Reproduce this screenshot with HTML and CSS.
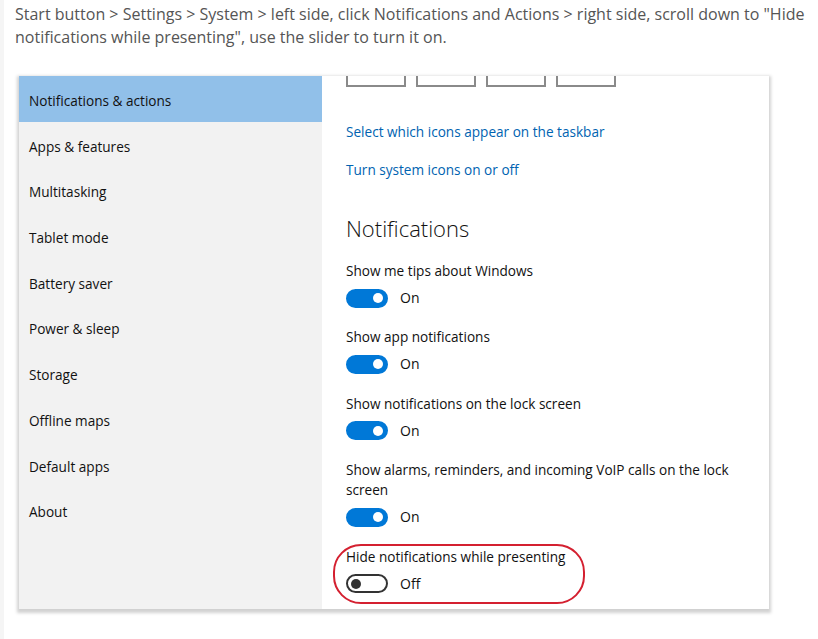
FILE: index.html
```html
<!DOCTYPE html>
<html lang="en">
<head>
    <meta charset="UTF-8">
    <meta name="viewport" content="width=device-width, initial-scale=1.0">
    <title>Hide notifications while presenting</title>
    <link rel="stylesheet" href="styles.css">
</head>
<body>
    <div class="page">
        <p class="intro">Start button &gt; Settings &gt; System &gt; left side, click Notifications and Actions &gt; right side, scroll down to "Hide notifications while presenting", use the slider to turn it on.</p>
        <div class="shot">
            <ul class="side-menu">
                <li class="active">Notifications &amp; actions</li>
                <li>Apps &amp; features</li>
                <li>Multitasking</li>
                <li>Tablet mode</li>
                <li>Battery saver</li>
                <li>Power &amp; sleep</li>
                <li>Storage</li>
                <li>Offline maps</li>
                <li>Default apps</li>
                <li>About</li>
            </ul>
            <div class="settings">
                <div class="quick-boxes">
                    <span></span><span></span><span></span><span></span>
                </div>
                <a class="link" href="#">Select which icons appear on the taskbar</a>
                <a class="link" href="#">Turn system icons on or off</a>
                <h2>Notifications</h2>
                <div class="setting">
                    <div class="label">Show me tips about Windows</div>
                    <div class="switch-row"><span class="switch on"></span>On</div>
                </div>
                <div class="setting">
                    <div class="label">Show app notifications</div>
                    <div class="switch-row"><span class="switch on"></span>On</div>
                </div>
                <div class="setting">
                    <div class="label">Show notifications on the lock screen</div>
                    <div class="switch-row"><span class="switch on"></span>On</div>
                </div>
                <div class="setting">
                    <div class="label">Show alarms, reminders, and incoming VoIP calls on the lock screen</div>
                    <div class="switch-row"><span class="switch on"></span>On</div>
                </div>
                <div class="setting marked">
                    <div class="label">Hide notifications while presenting</div>
                    <div class="switch-row"><span class="switch"></span>Off</div>
                </div>
            </div>
        </div>
    </div>
</body>
</html>
```

FILE: styles.css
```css
body {
    margin: 0;
    padding: 0;
    background-color: white;
    font-family: "Open Sans", sans-serif;
}
.page {
    border-left: 4px solid #f5f5f5;
    padding-left: 11px;
    min-height: 639px;
    box-sizing: border-box;
}
.intro {
    margin: 0;
    padding-top: 3px;
    width: 800px;
    font-size: 16px;
    line-height: 23px;
    color: #555;
}
.shot {
    display: flex;
    margin-top: 27px;
    margin-left: 4px;
    width: 750px;
    height: 533px;
    background-color: white;
    box-shadow: 0 2px 3px 2px rgba(0, 0, 0, 0.18);
    overflow: hidden;
}
.side-menu {
    list-style-type: none;
    margin: 0;
    padding: 0;
    width: 303px;
    flex-shrink: 0;
    background-color: #f2f2f2;
}
.side-menu li {
    height: 45.7px;
    line-height: 49px;
    padding-left: 10px;
    font-size: 13.6px;
    color: #111;
}
.side-menu li.active {
    background-color: #91c0e9;
}
.settings {
    flex: 1;
    padding-left: 24px;
    display: flex;
    flex-direction: column;
    align-items: flex-start;
}
.quick-boxes {
    display: flex;
    gap: 10px;
}
.quick-boxes span {
    width: 60px;
    height: 11px;
    box-sizing: border-box;
    border: 2px solid #8a8a8a;
    border-top: none;
}
.link {
    margin-top: 35px;
    font-size: 13.6px;
    line-height: 20px;
    color: #0063b1;
    text-decoration: none;
}
.link + .link {
    margin-top: 18px;
}
h2 {
    margin: 33px 0 17px;
    font-size: 22px;
    font-weight: 300;
    line-height: 30px;
    color: #111;
}
.setting {
    width: 400px;
    margin-bottom: 18.4px;
}
.label {
    padding-top: 1px;
    font-size: 13.6px;
    line-height: 20px;
    color: #111;
}
.switch-row {
    display: flex;
    align-items: center;
    gap: 12px;
    margin-top: 7px;
    font-size: 14px;
    line-height: 20px;
    color: #111;
}
.switch {
    position: relative;
    width: 42px;
    height: 19px;
    box-sizing: border-box;
    border: 2px solid #333;
    border-radius: 10px;
}
.switch::after {
    content: "";
    position: absolute;
    top: 2.5px;
    left: 3px;
    width: 10px;
    height: 10px;
    border-radius: 50%;
    background-color: #333;
}
.switch.on {
    background-color: #0078d7;
    border-color: #0078d7;
}
.switch.on::after {
    left: auto;
    right: 3px;
    background-color: white;
}
.marked {
    position: relative;
}
.marked::after {
    content: "";
    position: absolute;
    left: -13px;
    top: -2px;
    width: 252px;
    height: 60px;
    box-sizing: border-box;
    border: 2px solid #d42030;
    border-radius: 28px;
}
```
